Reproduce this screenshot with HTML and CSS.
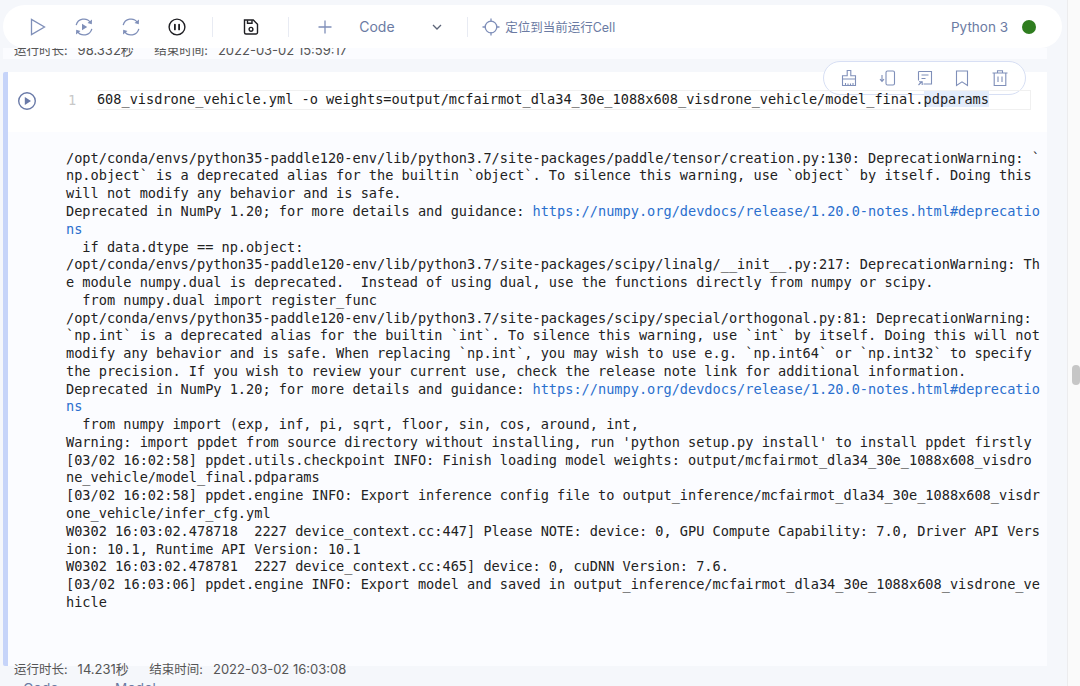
FILE: index.html
```html
<!DOCTYPE html>
<html lang="zh">
<head>
<meta charset="utf-8">
<title>Notebook</title>
<link rel="stylesheet" href="styles.css">
</head>
<body>
<div class="page">
  <main class="main">
    <header class="toolbar">
      <button class="tool"><svg width="20" height="20" viewBox="0 0 20 20"><path class="ic" d="M3.5 2.5v15l13-7.5z"/></svg></button>
      <button class="tool"><svg width="20" height="20" viewBox="0 0 20 20"><path class="ic" d="M2.2 8.2A8 8 0 0 1 16.6 5.6M17.8 11.8A8 8 0 0 1 3.4 14.4"/><path class="ic-fill" d="M18 2.6l-.2 4.6-4.3-1.3zM2 17.4l.2-4.6 4.3 1.3zM8 6.8l5.2 3.2L8 13.2z"/></svg></button>
      <button class="tool"><svg width="20" height="20" viewBox="0 0 20 20"><path class="ic" d="M2.2 8.2A8 8 0 0 1 16.6 5.6M17.8 11.8A8 8 0 0 1 3.4 14.4"/><path class="ic-fill" d="M18 2.6l-.2 4.6-4.3-1.3zM2 17.4l.2-4.6 4.3 1.3z"/></svg></button>
      <button class="tool"><svg width="20" height="20" viewBox="0 0 20 20"><circle class="ic-dark" cx="10" cy="10" r="7.9"/><path class="ic-dark ic-bold" d="M7.9 7.6v4.8M12.1 7.6v4.8"/></svg></button>
      <span class="divider divider-a"></span>
      <button class="tool tool-save"><svg width="18" height="18" viewBox="0 0 18 18"><path class="ic-dark" d="M2.5 2h8.800l4.200 4.200v8.300a1.500 1.500 0 0 1-1.500 1.500h-10a1.500 1.500 0 0 1-1.500-1.500z"/><path class="ic-dark" d="M5.500 2.300v3h4.500v-3"/><circle class="ic-dark" cx="9" cy="11.300" r="1.900"/></svg></button>
      <span class="divider divider-b"></span>
      <button class="tool tool-plus"><svg width="16" height="16" viewBox="0 0 16 16"><path class="ic" d="M8 1.500v13M1.500 8h13"/></svg></button>
      <span class="code-label">Code</span>
      <svg class="chevron" width="10" height="6" viewBox="0 0 10 6"><path d="M1 1l4 4 4-4"/></svg>
      <span class="divider divider-c"></span>
      <svg class="target" width="18" height="18" viewBox="0 0 18 18"><circle class="ic" cx="9" cy="9" r="5.800"/><path class="ic" d="M9 .5v3.500M9 14v3.500M.5 9h3.500M14 9h3.500"/></svg>
      <span class="locate">定位到当前运行Cell</span>
      <span class="kernel">Python 3</span>
      <span class="status-dot"></span>
    </header>

    <div class="prev-meta"><span class="meta-text"><span class="meta-label">运行时长:</span><span class="meta-value meta-gap">98.332秒</span><span class="meta-label">结束时间:</span><span class="meta-value">2022-03-02 15:59:17</span></span></div>

    <section class="cell">
      <div class="cell-input">
        <svg class="run-btn" width="20" height="20" viewBox="0 0 20 20"><circle cx="10" cy="10" r="8.300"/><path d="M7.800 6l6.200 4-6.200 4z"/></svg>
        <span class="line-no">1</span>
        <div class="editor"><code class="editor-line">x608_visdrone_vehicle.yml -o weights=output/mcfairmot_dla34_30e_1088x608_visdrone_vehicle/model_final.<span class="sel">pdparams</span></code></div>
        <div class="cell-actions">
          <svg width="18" height="18" viewBox="0 0 18 18"><path d="M7.200 1.500h3.600v5.200h4.700v3.300h-13V6.700h4.700zM2.500 10v6.500h13V10M5.500 14v2.500M8 14.500v2M10.500 14.500v2M13 14v2.500"/></svg>
          <svg width="18" height="18" viewBox="0 0 18 18"><rect x="8" y="2" width="8.500" height="14" rx="1.500"/><path d="M4 6v6M2 10.200L4 12.400l2-2.200"/></svg>
          <svg width="18" height="18" viewBox="0 0 18 18"><path d="M2.500 2.500h13v12.500h-8M2.500 2.500v9M5.500 6h7M5.500 9.500h4M2.500 16l3.500-3.500M3 12.800h3.200v3.200"/></svg>
          <svg width="18" height="18" viewBox="0 0 18 18"><path d="M3.500 2h11v14.500L9 12.800l-5.500 3.700z"/></svg>
          <svg width="18" height="18" viewBox="0 0 18 18"><path d="M1.500 4h15M6.500 4V1.800h5V4M3.200 4v12.500h11.600V4M7 7.500v5.500M11 7.500v5.500"/></svg>
        </div>
      </div>
      <pre class="output">/opt/conda/envs/python35-paddle120-env/lib/python3.7/site-packages/paddle/tensor/creation.py:130: DeprecationWarning: `
np.object` is a deprecated alias for the builtin `object`. To silence this warning, use `object` by itself. Doing this
will not modify any behavior and is safe.
Deprecated in NumPy 1.20; for more details and guidance: <a href="#">https://numpy.org/devdocs/release/1.20.0-notes.html#deprecatio
ns</a>
  if data.dtype == np.object:
/opt/conda/envs/python35-paddle120-env/lib/python3.7/site-packages/scipy/linalg/__init__.py:217: DeprecationWarning: Th
e module numpy.dual is deprecated.  Instead of using dual, use the functions directly from numpy or scipy.
  from numpy.dual import register_func
/opt/conda/envs/python35-paddle120-env/lib/python3.7/site-packages/scipy/special/orthogonal.py:81: DeprecationWarning:
`np.int` is a deprecated alias for the builtin `int`. To silence this warning, use `int` by itself. Doing this will not
modify any behavior and is safe. When replacing `np.int`, you may wish to use e.g. `np.int64` or `np.int32` to specify
the precision. If you wish to review your current use, check the release note link for additional information.
Deprecated in NumPy 1.20; for more details and guidance: <a href="#">https://numpy.org/devdocs/release/1.20.0-notes.html#deprecatio
ns</a>
  from numpy import (exp, inf, pi, sqrt, floor, sin, cos, around, int,
Warning: import ppdet from source directory without installing, run 'python setup.py install' to install ppdet firstly
[03/02 16:02:58] ppdet.utils.checkpoint INFO: Finish loading model weights: output/mcfairmot_dla34_30e_1088x608_visdro
ne_vehicle/model_final.pdparams
[03/02 16:02:58] ppdet.engine INFO: Export inference config file to output_inference/mcfairmot_dla34_30e_1088x608_visdr
one_vehicle/infer_cfg.yml
W0302 16:03:02.478718  2227 device_context.cc:447] Please NOTE: device: 0, GPU Compute Capability: 7.0, Driver API Vers
ion: 10.1, Runtime API Version: 10.1
W0302 16:03:02.478781  2227 device_context.cc:465] device: 0, cuDNN Version: 7.6.
[03/02 16:03:06] ppdet.engine INFO: Export model and saved in output_inference/mcfairmot_dla34_30e_1088x608_visdrone_ve
hicle</pre>
    </section>

    <div class="meta"><span class="meta-label">运行时长:</span><span class="meta-value meta-gap">14.231秒</span><span class="meta-label">结束时间:</span><span class="meta-value">2022-03-02 16:03:08</span></div>
    <div class="add-row"><span class="add-item add-code">+ Code</span><span class="add-item">+ Model</span></div>
  </main>
  <aside class="rail"><div class="thumb"></div></aside>
</div>
</body>
</html>
```

FILE: styles.css
```css
* { box-sizing: border-box; }
html, body { margin: 0; padding: 0; }
body { background: #fafafa; font-family: Inter, "Noto Sans CJK SC", sans-serif; }

.page { width: 1080px; height: 686px; display: flex; overflow: hidden; }
.main { width: 1068px; height: 686px; flex: none; padding-left: 3px; background: #f5f7fb; border-right: 1px solid #ececee; overflow: hidden; }
.rail { flex: 1; background: #fafafa; padding: 365px 0 0 4px; }
.thumb { width: 8px; height: 20px; border-radius: 4px; background: #c6c6c6; }

.toolbar { margin-top: 5px; width: 1059px; height: 43px; border-radius: 21.500px; background: #fff; display: flex; align-items: center; padding-left: 12px; position: relative; z-index: 2; }
.tool { width: 46.300px; height: 24px; flex: none; padding: 0; border: 0; background: none; display: flex; align-items: center; justify-content: center; }
.tool-save { width: 18px; margin-left: 29px; }
.tool-plus { width: 16px; margin-left: 28px; }
.ic { fill: none; stroke: #7f8fb9; stroke-width: 1.300; }
.ic-fill { fill: #7f8fb9; }
.ic-dark { fill: none; stroke: #1e1e22; stroke-width: 1.400; }
.ic-bold { stroke-width: 1.800; stroke-linecap: round; }
.divider { width: 1px; height: 20px; flex: none; background: #e8ebf3; }
.divider-a { margin-left: 12px; }
.divider-b { margin-left: 28px; }
.divider-c { margin-left: 25px; }
.code-label { margin-left: 26px; width: 34px; flex: none; font-size: 14px; color: #6b7ba3; }
.chevron { margin-left: 39px; flex: none; fill: none; stroke: #5c6478; stroke-width: 1.300; }
.target { margin-left: 14px; flex: none; }
.locate { margin-left: 5px; font-size: 12.500px; color: #6b7ba3; white-space: nowrap; flex: none; }
.kernel { margin-left: auto; font-size: 13.500px; color: #6b7ba3; flex: none; }
.status-dot { width: 14px; height: 14px; margin: 0 26px 0 14px; border-radius: 50%; background: #2f7d1f; flex: none; }

.prev-meta { width: 1044px; height: 11px; background: #fbfcff; overflow: hidden; display: flex; align-items: flex-end; padding: 0 0 0 11px; }
.meta-text { display: block; white-space: nowrap; }
.prev-meta, .meta { font-size: 12.500px; line-height: 16px; color: #555; }
.meta-label { margin-right: 10px; }
.meta-value { font-size: 13px; }
.meta-gap { display: inline-block; margin-right: 20.500px; }

.cell { margin: 13px 0 0 0; width: 1044px; border-left: 5px solid #c6d4f9; border-radius: 2px; position: relative; }
.cell-input { height: 60px; background: #fff; display: flex; align-items: center; padding: 0 0 4px 9px; position: relative; }
.run-btn { flex: none; margin-top: 1px; }
.run-btn circle { fill: none; stroke: #6a7aa8; stroke-width: 1.400; }
.run-btn path { fill: #6a7aa8; }
.line-no { width: 10px; margin-left: 31px; flex: none; font: 13.600px "DejaVu Sans Mono", monospace; color: #c8c8c8; }
.editor { margin: 0 16px 0 19px; flex: 1; min-width: 0; height: 20px; overflow: hidden; display: flex; justify-content: flex-end; padding-right: 41px; border: 1.500px solid #f0f0f0; border-left: 0; position: relative; z-index: 1; }
.editor-line { flex: none; font: 13.600px/17px "DejaVu Sans Mono", monospace; color: #1c1c1c; white-space: pre; }
.sel { background: #e3ecfb; }
.cell-actions { position: absolute; top: -11px; right: 21px; width: 203px; height: 34px; border: 1px solid #d7dff4; border-radius: 17px; background: rgba(255,255,255,.9); display: flex; align-items: center; justify-content: space-between; padding: 0 16px 0 16px; }
.cell-actions svg { fill: none; stroke: #7f8fb9; stroke-width: 1.100; }

.output { margin: 0; height: 534px; background: #fbfcff; padding: 17.700px 0 0 58px; font: 13.600px/17.760px "DejaVu Sans Mono", monospace; color: #222; white-space: pre; overflow: hidden; }
.output a { color: #2a6fce; text-decoration: none; }

.meta { position: relative; margin-top: -5px; padding-left: 11px; white-space: nowrap; }
.add-row { margin-top: 2px; padding-left: 7px; display: flex; font-size: 13.500px; color: #6b7ba3; height: 16px; line-height: 16px; letter-spacing: .3px; }
.add-item { margin-right: 43px; white-space: pre; }
```
